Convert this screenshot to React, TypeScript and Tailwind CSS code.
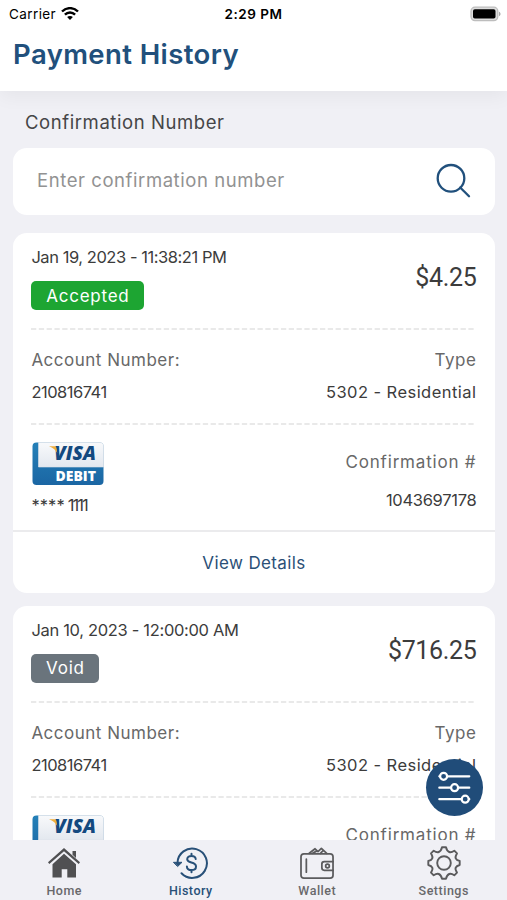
import React from 'react';
import clsx from 'clsx';

interface Payment {
    date: string;
    dateClass: string;
    status: string;
    statusClass: string;
    amount: string;
    account: string;
    type: string;
    confirmation: string;
}

const payments: Payment[] = [
    {
        date: 'Jan 19, 2023 - 11:38:21 PM',
        dateClass: 'tracking-[-0.45px]',
        status: 'Accepted',
        statusClass: 'w-[113px] bg-[#1da532] tracking-[0.75px]',
        amount: '$4.25',
        account: '210816741',
        type: '5302 - Residential',
        confirmation: '1043697178'
    },
    {
        date: 'Jan 10, 2023 - 12:00:00 AM',
        dateClass: 'tracking-[-0.32px]',
        status: 'Void',
        statusClass: 'w-[68px] bg-[#6a747c] tracking-[0.8px]',
        amount: '$716.25',
        account: '210816741',
        type: '5302 - Residential',
        confirmation: '1043697178'
    }
];

function StatusBar() {
    return (
        <div className="grid h-[28px] grid-cols-3 items-center px-[9px] text-[13.5px] text-black">
            <div className="flex items-center gap-[5px]">
                <span className="tracking-[0.4px]">Carrier</span>
                <svg width="18" height="14" viewBox="0 0 18 14" fill="none" stroke="#000" strokeWidth="2.4">
                    <path d="M1 4.5C5.5 0 12.5 0 17 4.5" />
                    <path d="M3.9 7.7C6.8 4.8 11.2 4.8 14.1 7.7" />
                    <path d="M9 13L6.1 10.1C7.7 8.5 10.3 8.5 11.9 10.1Z" fill="#000" stroke="none" />
                </svg>
            </div>
            <span className="text-center font-semibold tracking-[0.5px]">2:29 PM</span>
            <svg className="mr-[-4px] mt-[-1px] justify-self-end" width="32" height="16" viewBox="0 0 32 16">
                <rect x="1" y="1.2" width="26.8" height="13.4" rx="4" fill="#ddd" stroke="#bdbdbd" strokeWidth="1.3" />
                <rect x="3" y="3.2" width="22.5" height="9.4" rx="1.8" fill="#000" />
                <path d="M29 5.8C31 6.5 31 9.5 29 10.2Z" fill="#aaa" />
            </svg>
        </div>
    );
}

function VisaDebit() {
    return (
        <svg className="ml-[0.6px] block overflow-visible" width="72" height="44" viewBox="0 0 72 44">
            <defs>
                <linearGradient id="visaBlue" x1="0" y1="0" x2="0" y2="1">
                    <stop offset="0" stopColor="#2480b8" />
                    <stop offset="1" stopColor="#1b66a3" />
                </linearGradient>
                <linearGradient id="visaGrey" x1="0" y1="0" x2="0" y2="1">
                    <stop offset="0" stopColor="#f8f9fb" />
                    <stop offset="1" stopColor="#e3e8ef" />
                </linearGradient>
            </defs>
            <rect x="0.5" y="0.5" width="71" height="42.5" rx="4" fill="url(#visaBlue)" />
            <path d="M6.5 0.5H68C70 0.5 71.5 2 71.5 4V25H6.5Z" fill="url(#visaGrey)" stroke="#dfe3e9" strokeWidth="0.6" />
            <text x="22" y="18.3" textLength="42" lengthAdjust="spacingAndGlyphs" fontFamily="Open Sans, sans-serif" fontSize="19" fontWeight="800" fontStyle="italic" fill="#13497f">VISA</text>
            <path d="M17 4.3H22.5C24 4.3 24.5 5.5 24.7 7L25.2 11C23.6 8 21 5.6 17 4.3Z" fill="#eeae3c" />
            <text x="23.5" y="38.8" textLength="40.5" lengthAdjust="spacingAndGlyphs" fontFamily="Open Sans, sans-serif" fontSize="13.4" fontWeight="800" fill="#fff">DEBIT</text>
        </svg>
    );
}

function DashedLine() {
    return (
        <svg className="block" width="445" height="2" viewBox="0 0 445 2">
            <path d="M0 1H445" stroke="#e2e2e2" strokeWidth="1.6" strokeDasharray="5.3 2.51" />
        </svg>
    );
}

function PaymentCard({ payment }: { payment: Payment }) {
    return (
        <div className="h-[360px] w-[482px] shrink-0 rounded-[14px] bg-white text-[16.5px] leading-[24px] text-[#3c3c3c]">
            <div className="pr-[18.6px] pl-[18.4px]">
                <div className="flex h-[95px] justify-between pt-[12px]">
                    <div>
                        <p className={clsx('whitespace-nowrap', payment.dateClass)}>{payment.date}</p>
                        <div className={clsx('mt-[12px] flex h-[29px] items-center justify-center rounded-[5px] text-[17px] text-white', payment.statusClass)}>
                            {payment.status}
                        </div>
                    </div>
                    <p className="pt-[16px] font-[Roboto] text-[25px] leading-[34px] tracking-[-0.35px]">{payment.amount}</p>
                </div>
                <DashedLine />
                <div className="h-[93px] pt-[18px]">
                    <div className="flex justify-between text-[17px] tracking-[0.5px] text-[#686868]">
                        <span>Account Number:</span>
                        <span>Type</span>
                    </div>
                    <div className="mt-[8px] flex justify-between">
                        <span className="tracking-[-0.5px]">{payment.account}</span>
                        <span className="tracking-[0.45px]">{payment.type}</span>
                    </div>
                </div>
                <DashedLine />
                <div className="flex h-[105px] justify-between">
                    <div className="pt-[17px]">
                        <VisaDebit />
                        <p className="mt-[7px] flex gap-[3px]">
                            <span className="tracking-[0.1px]">****</span>
                            <span className="tracking-[-2px]">1111</span>
                        </p>
                    </div>
                    <div className="pt-[25px] text-right">
                        <p className="text-[17px] tracking-[0.8px] text-[#686868]">Confirmation #</p>
                        <p className="mt-[14px] tracking-[-0.3px]">{payment.confirmation}</p>
                    </div>
                </div>
            </div>
            <div className="flex h-[63px] items-center justify-center border-t-2 border-[#ebebed] text-[17px] tracking-[0.38px] text-[#2b5077]">
                View Details
            </div>
        </div>
    );
}

function HomeIcon() {
    return (
        <svg width="34" height="32" viewBox="0 0 34 32" fill="#505052">
            <path d="M17 1L33 15.3L31.7 17L17 4.2L2.3 17L1 15.3Z" />
            <path d="M25.5 4H29V11L25.5 7.8Z" />
            <path d="M17 6.7L29 17.2V30.5H20.3V22.3H14.7V30.5H5.5V17.2Z" />
        </svg>
    );
}

function HistoryIcon() {
    return (
        <svg width="36" height="32" viewBox="0 0 36 32" fill="none" stroke="#285078" strokeWidth="2" strokeLinecap="round">
            <path d="M4.5 16A14.7 14.7 0 1 1 8.5 26.3" />
            <path d="M0.8 15.3H9L4.9 19.3Z" fill="#285078" strokeWidth="1" strokeLinejoin="round" />
            <path d="M22.7 12C22.5 9.8 20.8 8.9 18.5 8.9C16 8.9 14.2 10.2 14.2 12.2C14.2 16.7 23 14.3 23 19.5C23 21.8 21 23.1 18.5 23.1C16 23.1 14.1 21.9 13.9 19.6M18.5 6.7V8.7M18.5 23.3V25.3" />
        </svg>
    );
}

function WalletIcon() {
    return (
        <svg width="35" height="33" viewBox="0 0 36 34" fill="none" stroke="#5b5b5d" strokeWidth="1.8" strokeLinecap="round" strokeLinejoin="round">
            <path d="M4 7H31C33 7 34 8 34 10V29C34 31 33 32 31 32H4C2 32 1 31 1 29V10C1 8 2 7 4 7Z" />
            <path d="M9.5 6.5L15.5 1.8L18.5 4.8L22 1.5L27.5 6.5M13 6.5L16.5 4.5M21 6.5L23 4.5M6.5 12.5V26" />
            <path d="M34 15H25C23.5 15 22.5 16 22.5 17.5V21.5C22.5 23 23.5 24 25 24H34" />
            <circle cx="28.3" cy="19.5" r="1.9" />
        </svg>
    );
}

function SettingsIcon() {
    return (
        <svg width="34" height="34" viewBox="0 0 34 34" fill="none" stroke="#5b5b5d" strokeWidth="1.9" strokeLinejoin="round">
            <path d="M15 1.3H19C19.8 4.8 20.5 5.3 22.2 6C24.2 6.8 25 6.3 27.3 4.7L30 7.4C28.3 10 28 10.7 28.7 12.3C29.4 14 30 14.3 32.7 15V19C30 19.7 29.4 20 28.7 21.7C28 23.3 28.3 24 30 26.6L27.3 29.3C25 27.7 24.2 27.2 22.2 28C20.5 28.7 19.8 29.2 19 32.7H15C14.2 29.2 13.5 28.7 11.8 28C9.8 27.2 9 27.7 6.7 29.3L4 26.6C5.7 24 6 23.3 5.3 21.7C4.6 20 4 19.7 1.3 19V15C4 14.3 4.6 14 5.3 12.3C6 10.7 5.7 10 4 7.4L6.7 4.7C9 6.3 9.8 6.8 11.8 6C13.5 5.3 14.2 4.8 15 1.3Z" />
            <circle cx="17" cy="17" r="6.8" />
        </svg>
    );
}

const tabs = [
    { name: 'Home', icon: <HomeIcon />, active: false },
    { name: 'History', icon: <HistoryIcon />, active: true },
    { name: 'Wallet', icon: <WalletIcon />, active: false },
    { name: 'Settings', icon: <SettingsIcon />, active: false }
];

export default function App() {
    return (
        <div className="relative flex h-[900px] w-[507px] flex-col overflow-hidden bg-[#f0f0f5] font-[Inter,sans-serif]">
            <header className="h-[91px] shrink-0 bg-white shadow-[0_5px_18px_rgba(0,0,0,0.05)]">
                <StatusBar />
                <h1 className="pl-[13px] text-[27.5px] leading-[52px] font-semibold tracking-[0.4px] text-[#21507c]">Payment History</h1>
            </header>

            <main className="flex min-h-0 flex-1 flex-col overflow-hidden px-[13px]">
                <label className="shrink-0 pt-[19px] pl-[12px] text-[18.5px] leading-[24px] tracking-[0.58px] text-[#454547]">Confirmation Number</label>
                <div className="mt-[13.5px] flex h-[67px] w-[482px] shrink-0 items-center justify-between rounded-[14px] bg-white pr-[24px] pl-[24px]">
                    <span className="text-[18.5px] tracking-[0.57px] text-[#929292]">Enter confirmation number</span>
                    <svg width="36" height="36" viewBox="0 0 36 36" fill="none" stroke="#21507c" strokeWidth="2.3" strokeLinecap="round">
                        <circle cx="16" cy="15.3" r="13.3" />
                        <path d="M25.2 24.5L34 33.3" />
                    </svg>
                </div>
                <div className="mt-[18.9px] flex flex-col gap-[12.5px]">
                    {payments.map(payment => (
                        <PaymentCard key={payment.date} payment={payment} />
                    ))}
                </div>
            </main>

            {/* Filter button */}
            <button className="absolute top-[759px] left-[426px] flex h-[57px] w-[57px] items-center justify-center rounded-full bg-[#204c79]">
                <svg width="34" height="34" viewBox="0 0 34 34" fill="#204c79" stroke="#fff" strokeWidth="2.2" strokeLinecap="round">
                    <path d="M1.3 5.3H31.3M1.3 16.7H31.3M1.3 28.2H31.3" />
                    <circle cx="5.6" cy="5.3" r="3.5" />
                    <circle cx="16.6" cy="16.7" r="3.5" />
                    <circle cx="27.2" cy="28.2" r="3.5" />
                </svg>
            </button>

            <nav className="grid h-[60px] shrink-0 grid-cols-4 bg-[#f0f0f5] pl-[1px] font-[Roboto]">
                {tabs.map(tab => (
                    <div
                        key={tab.name}
                        className={clsx('flex flex-col items-center pt-[5px] text-[12.5px] leading-[16px] font-medium tracking-[0.5px]', tab.active ? 'text-[#285078]' : 'text-[#68686b]')}
                    >
                        <div className="flex h-[36px] items-center">{tab.icon}</div>
                        <span className="pt-[2px]">{tab.name}</span>
                    </div>
                ))}
            </nav>
        </div>
    );
}
